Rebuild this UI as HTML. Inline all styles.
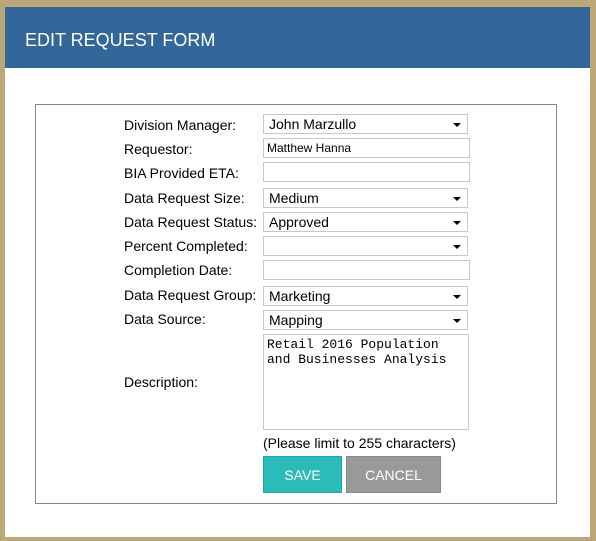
<!DOCTYPE html><html><head><style>
body{margin:0;width:596px;height:541px;background:#bba777;position:relative;overflow:hidden;font-family:"Liberation Sans",sans-serif}
.win{position:absolute;left:5px;top:7px;width:585px;height:530px;background:#fff}
.hd{position:absolute;left:0;top:0;width:585px;height:61px;background:#336699;color:#fff;font-size:18px}
.hd span{position:absolute;left:20px;top:23px}
.panel{position:absolute;left:35px;top:104px;width:522px;height:400px;border:1px solid #888;box-sizing:border-box}
.l{position:absolute;left:124px;font-size:14px;color:#000}
.f{position:absolute;left:263px;height:20px;box-sizing:border-box;border:1px solid #c8c8cc;background:#fff;font-size:14px;padding-left:5px;line-height:18px;color:#000}
.s{width:205px}.s:after{content:"";position:absolute;right:6px;top:8px;border-left:4px solid transparent;border-right:4px solid transparent;border-top:4px solid #000}
.t{width:207px;font-size:12px;padding-left:3px}
.b{position:absolute;top:456px;height:37px;color:#fff;font-size:14px;text-align:center;line-height:37px;box-sizing:border-box}
</style></head><body>
<div class="win"><div class="hd"><span>EDIT REQUEST FORM</span></div></div>
<div class="panel"></div>
<div class="l" style="top:117px">Division Manager:</div><div class="f s" style="top:114px">John Marzullo</div>
<div class="l" style="top:141px">Requestor:</div><div class="f t" style="top:138px">Matthew Hanna</div>
<div class="l" style="top:165px">BIA Provided ETA:</div><div class="f t" style="top:162px"></div>
<div class="l" style="top:190px">Data Request Size:</div><div class="f s" style="top:188px">Medium</div>
<div class="l" style="top:214px">Data Request Status:</div><div class="f s" style="top:212px">Approved</div>
<div class="l" style="top:238px">Percent Completed:</div><div class="f s" style="top:236px"></div>
<div class="l" style="top:262px">Completion Date:</div><div class="f t" style="top:260px"></div>
<div class="l" style="top:287px">Data Request Group:</div><div class="f s" style="top:286px">Marketing</div>
<div class="l" style="top:311px">Data Source:</div><div class="f s" style="top:310px">Mapping</div>
<div class="l" style="top:374px">Description:</div>
<div class="f" style="top:334px;width:206px;height:96px;font-family:'Liberation Mono',monospace;font-size:13px;line-height:15px;padding:2px 3px">Retail 2016 Population<br>and Businesses Analysis</div>
<div class="l" style="left:263px;top:435px">(Please limit to 255 characters)</div>
<div class="b" style="left:263px;width:79px;background:#2bbbb8;border:1px solid #20a8a5">SAVE</div>
<div class="b" style="left:346px;width:95px;background:#999;border:1px solid #888">CANCEL</div>
</body></html>
